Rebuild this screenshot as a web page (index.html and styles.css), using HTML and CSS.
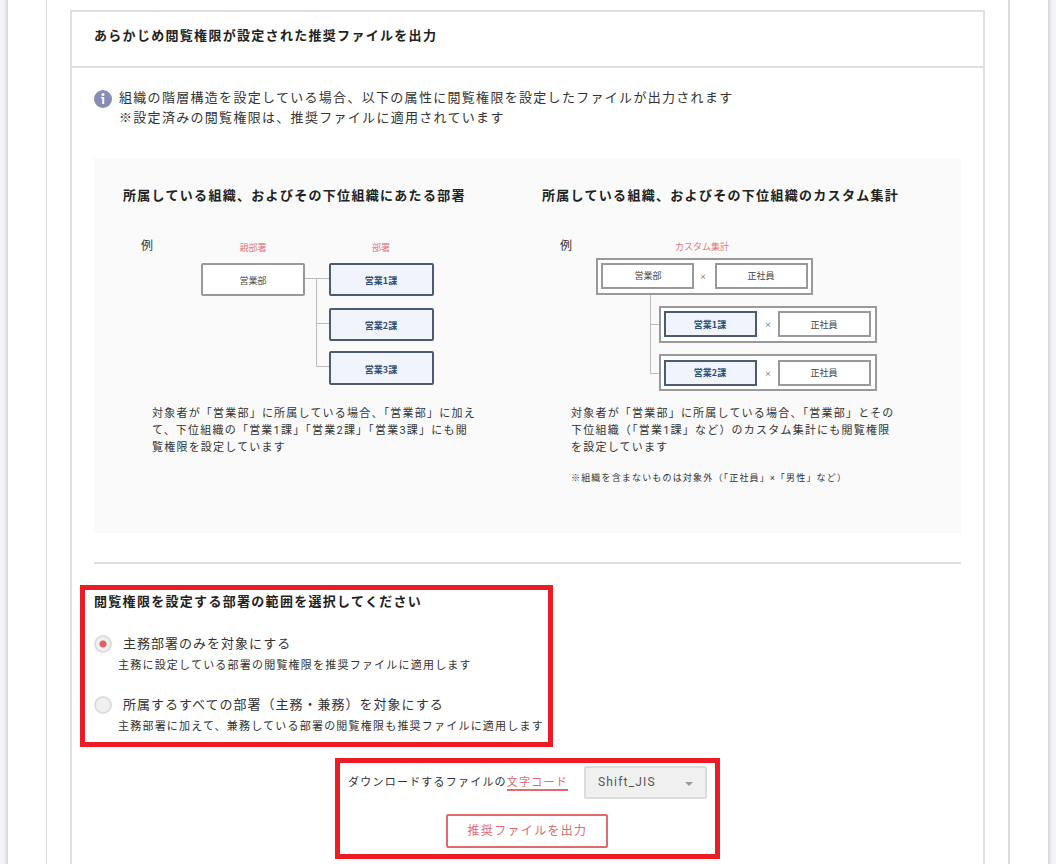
FILE: index.html
```html
<!DOCTYPE html>
<html lang="ja">
<head>
    <meta charset="UTF-8">
    <meta name="viewport" content="width=device-width, initial-scale=1.0">
    <title>推奨ファイルを出力</title>
    <link rel="stylesheet" href="styles.css">
</head>
<body>
    <main class="sheet">
        <div class="frame">
            <section class="panel">
                <header class="panel-header">
                    <h2>あらかじめ閲覧権限が設定された推奨ファイルを出力</h2>
                </header>

                <div class="panel-body">
                    <div class="info">
                        <svg class="info-icon" width="18" height="22" viewBox="0 0 18 22" aria-hidden="true">
                            <circle cx="9" cy="11" r="9" fill="#8a8cb8"/>
                            <circle cx="9" cy="6.5" r="1.5" fill="#fff"/>
                            <path d="M7 9h3.200v7H8.200v-5.800H7z" fill="#fff"/>
                        </svg>
                        <p>組織の階層構造を設定している場合、以下の属性に閲覧権限を設定したファイルが出力されます<br>※設定済みの閲覧権限は、推奨ファイルに適用されています</p>
                    </div>

                    <div class="examples">
                        <section class="example">
                            <h3>所属している組織、およびその下位組織にあたる部署</h3>
                            <div class="figure">
                                <span class="figure-label">例</span>
                                <svg class="diagram" width="300" height="160" viewBox="0 0 300 160">
                                    <path class="link" d="M134 44.500H159M145.500 44.500V132.500H159M145.500 89.500H159"/>
                                    <text class="caption" x="82" y="17">親部署</text>
                                    <text class="caption" x="210" y="17">部署</text>
                                    <rect class="box" x="31" y="30" width="102" height="31" rx="1"/>
                                    <text x="82" y="50">営業部</text>
                                    <rect class="box blue" x="159" y="30" width="103" height="31" rx="1"/>
                                    <text class="strong" x="210" y="50">営業1課</text>
                                    <rect class="box blue" x="159" y="75" width="103" height="31" rx="1"/>
                                    <text class="strong" x="210" y="95">営業2課</text>
                                    <rect class="box blue" x="159" y="118" width="103" height="32" rx="1"/>
                                    <text class="strong" x="210" y="139">営業3課</text>
                                </svg>
                            </div>
                            <p class="detail">対象者が「営業部」に所属している場合、「営業部」に加えて、下位組織の「営業1課」「営業2課」「営業3課」にも閲覧権限を設定しています</p>
                        </section>

                        <section class="example">
                            <h3>所属している組織、およびその下位組織のカスタム集計</h3>
                            <div class="figure">
                                <span class="figure-label">例</span>
                                <svg class="diagram" width="300" height="160" viewBox="0 0 300 160">
                                    <path class="link" d="M60.500 60V139.500H70M60.500 90.500H70"/>
                                    <text class="caption" x="112" y="16">カスタム集計</text>
                                    <rect class="box" x="7" y="25" width="215" height="35"/>
                                    <rect class="box" x="12" y="30" width="91" height="24"/>
                                    <text x="58" y="45">営業部</text>
                                    <text class="times" x="113" y="45">×</text>
                                    <rect class="box" x="126" y="30" width="91" height="24"/>
                                    <text x="171" y="45">正社員</text>
                                    <rect class="box" x="70" y="73" width="216" height="35"/>
                                    <rect class="box blue" x="75" y="78" width="91" height="24"/>
                                    <text class="strong" x="120" y="94">営業1課</text>
                                    <text class="times" x="178" y="93">×</text>
                                    <rect class="box" x="189" y="78" width="91" height="24"/>
                                    <text x="234" y="94">正社員</text>
                                    <rect class="box" x="70" y="121" width="216" height="35"/>
                                    <rect class="box blue" x="75" y="127" width="91" height="24"/>
                                    <text class="strong" x="120" y="142">営業2課</text>
                                    <text class="times" x="178" y="142">×</text>
                                    <rect class="box" x="189" y="127" width="91" height="24"/>
                                    <text x="234" y="142">正社員</text>
                                </svg>
                            </div>
                            <p class="detail">対象者が「営業部」に所属している場合、「営業部」とその下位組織（「営業1課」など）のカスタム集計にも閲覧権限を設定しています</p>
                            <p class="detail note">※組織を含まないものは対象外（「正社員」×「男性」など）</p>
                        </section>
                    </div>

                    <hr class="divider">

                    <form>
                        <div class="highlight range" role="radiogroup" aria-labelledby="range-title">
                            <h3 id="range-title">閲覧権限を設定する部署の範囲を選択してください</h3>
                            <div class="option">
                                <label for="range-main"><input type="radio" name="range" id="range-main" checked>主務部署のみを対象にする</label>
                                <p>主務に設定している部署の閲覧権限を推奨ファイルに適用します</p>
                            </div>
                            <div class="option">
                                <label for="range-all"><input type="radio" name="range" id="range-all">所属するすべての部署（主務・兼務）を対象にする</label>
                                <p>主務部署に加えて、兼務している部署の閲覧権限も推奨ファイルに適用します</p>
                            </div>
                        </div>

                        <div class="highlight download">
                            <div class="encoding">
                                <label for="encoding">ダウンロードするファイルの<a href="#">文字コード</a></label>
                                <div class="select-box">
                                    <select id="encoding">
                                        <option>Shift_JIS</option>
                                        <option>UTF-8</option>
                                    </select>
                                </div>
                            </div>
                            <button type="button">推奨ファイルを出力</button>
                        </div>
                    </form>
                </div>
            </section>
        </div>
    </main>
</body>
</html>
```
FILE: styles.css
```css
* {
    margin: 0;
    padding: 0;
    box-sizing: border-box;
}

body {
    font-family: Roboto, "Noto Sans CJK JP", sans-serif;
    font-size: 13px;
    line-height: 20px;
    color: #333;
    background-color: #f4f5fc;
    padding: 0 8px;
}

h2,
h3 {
    font-size: 13px;
    font-weight: bold;
    letter-spacing: 0.1em;
    color: #222;
}

.sheet {
    display: flex;
    min-height: 100vh;
    padding: 0 38px;
    background-color: #fff;
    box-shadow: 0 0 3px 2px #d3d3d8;
}

.frame {
    display: flex;
    flex: 1;
    padding: 10px 23px 0;
    border: solid #dcdcdc;
    border-width: 0 2px 0 1px;
}

.panel {
    flex: 1;
    border: 2px solid #dfdfdf;
    border-bottom: none;
}

.panel-header {
    padding: 14px 22px 20px;
    border-bottom: 2px solid #dfdfdf;
}

.panel-body {
    padding: 20px 22px 5px;
}

.info {
    display: flex;
    gap: 7px;
    letter-spacing: 0.1em;
}

.info-icon {
    flex-shrink: 0;
}

/* examples */
.examples {
    display: grid;
    grid-template-columns: 1fr 1fr;
    margin-top: 30px;
    padding: 28px 0 46px 29px;
    background-color: #fafafa;
}

.figure {
    display: flex;
    gap: 18px;
    margin-top: 28px;
    padding-left: 18px;
}

.figure-label {
    width: 12px;
    font-size: 12px;
    line-height: 24px;
}

.detail {
    margin-top: 11px;
    padding: 0 65px 0 29px;
    font-size: 11px;
    line-height: 17px;
    letter-spacing: 0.11em;
}

.note {
    margin-top: 14px;
    font-size: 9px;
    letter-spacing: 0.13em;
}

.diagram text {
    font-family: "Noto Sans CJK JP", sans-serif;
    font-size: 9px;
    text-anchor: middle;
    fill: #444;
}

.diagram .times {
    font-size: 7px;
}

.diagram .caption {
    fill: #e27678;
}

.diagram .strong {
    font-weight: bold;
    fill: #2f4f78;
}

.link {
    fill: none;
    stroke: #bbb;
}

.box {
    fill: #fff;
    stroke: #999;
    stroke-width: 2;
}

.blue {
    fill: #f1f5fb;
    stroke: #4b5b70;
}

.divider {
    margin: 29px 0 21px;
    border: none;
    border-top: 2px solid #dedede;
}

/* form */
.highlight {
    width: fit-content;
    border: 5px solid #ed1c24;
}

.range {
    margin-left: -14px;
    padding: 2px 4px 5px 9px;
}

.option {
    margin-top: 18px;
}

.option label {
    display: flex;
    align-items: center;
    gap: 11px;
    line-height: 22px;
    letter-spacing: 1px;
}

.option p {
    padding: 1px 0 0 24px;
    font-size: 11px;
    letter-spacing: 0.11em;
}

h3 + .option {
    margin-top: 21px;
}

input[type="radio"] {
    appearance: none;
    width: 18px;
    height: 18px;
    border: 2px solid #dcdcdc;
    border-radius: 50%;
    background-color: #f0f0f0;
}

input[type="radio"]:checked {
    background-image: radial-gradient(circle, #e06065 3px, transparent 4px);
}

.download {
    display: flex;
    flex-direction: column;
    align-items: center;
    gap: 15px;
    margin: 11px auto 0;
    padding: 3px 8px 6px;
}

.encoding {
    display: flex;
    align-items: center;
    gap: 16px;
    font-size: 11px;
    letter-spacing: 0.11em;
}

.encoding a {
    color: #e06a6e;
    text-decoration: none;
    border-bottom: 2px solid #e06a6e;
}

.select-box {
    position: relative;
}

.select-box::after {
    content: "";
    position: absolute;
    top: 16px;
    right: 14px;
    border: 4px solid transparent;
    border-top-color: #999;
    pointer-events: none;
}

select {
    appearance: none;
    display: block;
    width: 123px;
    height: 33px;
    padding: 0 12px 2px;
    border: 2px solid #dcdcdc;
    border-radius: 2px;
    background-color: #f0f0f0;
    font-family: inherit;
    font-size: 12px;
    letter-spacing: 0.1em;
    color: #555;
}

button {
    width: 162px;
    height: 34px;
    padding-bottom: 3px;
    border: 2px solid #e06a6e;
    border-radius: 2px;
    background-color: #fff;
    font-family: inherit;
    font-size: 12px;
    letter-spacing: 0.11em;
    color: #e06a6e;
    cursor: pointer;
}
```
